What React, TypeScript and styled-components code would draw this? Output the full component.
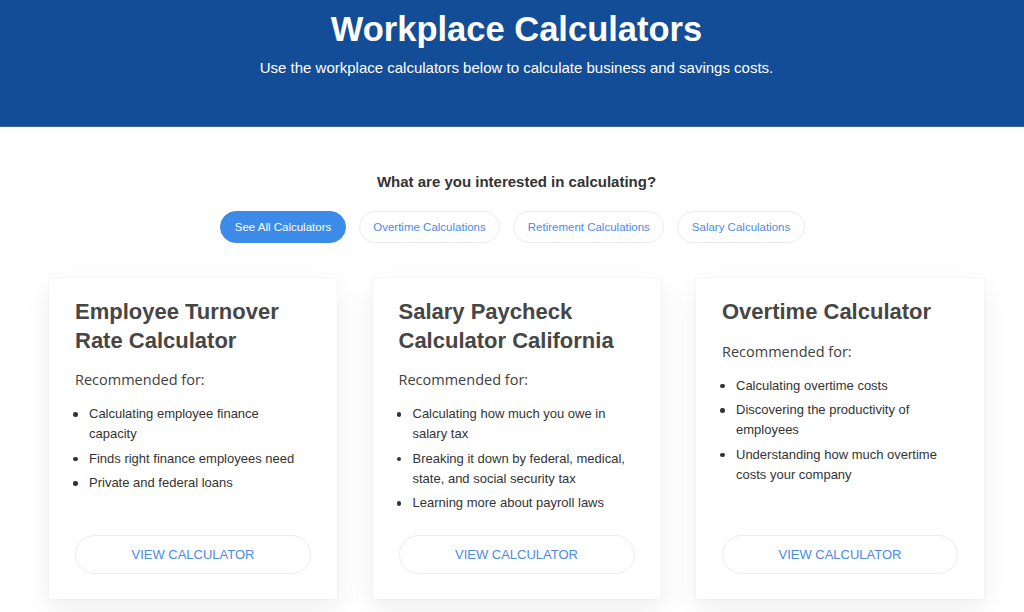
import React from "react";
import styled, { createGlobalStyle } from "styled-components";

const GlobalStyle = createGlobalStyle`
  html, body {
    margin: 0;
    padding: 0;
    background: #ffffff;
    font-family: "Liberation Sans", Arial, Helvetica, sans-serif;
    -webkit-font-smoothing: antialiased;
  }
  * { box-sizing: border-box; }
`;

const Page = styled.div`
  width: 1024px;
  height: 612px;
  overflow: hidden;
  background: #ffffff;
`;

const Hero = styled.header`
  height: 127px;
  background: #144d97;
  border-bottom: 1px solid #3a68a6;
  padding: 8.5px 0 0 9px;
  text-align: center;
  color: #ffffff;
`;

const HeroTitle = styled.h1`
  margin: 0;
  font-size: 34.5px;
  line-height: 40px;
  font-weight: 700;
`;

const HeroText = styled.p`
  margin: 9.5px 0 0;
  font-size: 15px;
  line-height: 20px;
`;

const Main = styled.main`
  padding: 45px 0 0 9px;
  display: flex;
  flex-direction: column;
  align-items: center;
`;

const Question = styled.h2`
  margin: 0;
  font-size: 15px;
  line-height: 20px;
  font-weight: 700;
  color: #333333;
`;

const Filters = styled.div`
  margin-top: 19px;
  display: flex;
  gap: 13px;
  justify-content: center;
  padding-right: 8px;
`;

const Pill = styled.button<{ $active?: boolean }>`
  height: 32px;
  padding: 0 13.5px;
  border-radius: 16px;
  border: 1px solid ${(p) => (p.$active ? "#3d8be8" : "#ececec")};
  background: ${(p) => (p.$active ? "#3d8be8" : "#ffffff")};
  color: ${(p) => (p.$active ? "#ffffff" : "#4a8be6")};
  font-family: "Liberation Sans", Arial, sans-serif;
  font-size: 11.5px;
  line-height: 29px;
  cursor: pointer;
  white-space: nowrap;
`;

const Cards = styled.div`
  margin-top: 35px;
  display: grid;
  grid-template-columns: repeat(3, 288px);
  column-gap: 35.5px;
`;

const Card = styled.article`
  min-height: 321px;
  background: #ffffff;
  padding: 20px 26px 25.5px 26px;
  display: flex;
  flex-direction: column;
  box-shadow: 0 0 0 1px rgba(0, 0, 0, 0.02), 0 10px 28px rgba(0, 0, 0, 0.07);
`;

const CardTitle = styled.h3`
  margin: 0;
  font-size: 22px;
  line-height: 28.5px;
  font-weight: 700;
  color: #464646;
`;

const Recommended = styled.p`
  margin: 15px 0 0;
  font-family: "Open Sans", "Liberation Sans", sans-serif;
  font-size: 14.5px;
  line-height: 20px;
  color: #404040;
`;

const List = styled.ul`
  margin: 14px 0 0;
  padding: 0 6px 0 0;
  list-style: none;
`;

const Item = styled.li`
  display: flex;
  font-size: 13px;
  line-height: 20px;
  color: #333333;

  & + & {
    margin-top: 4.5px;
  }

  &::before {
    content: "";
    flex: none;
    width: 4.5px;
    height: 4.5px;
    margin: 8.25px 11.5px 0 -2px;
    border-radius: 50%;
    background: #333333;
  }
`;

const ViewButton = styled.button`
  margin-top: auto;
  width: 100%;
  height: 39px;
  border: 1px solid #ededed;
  border-radius: 20px;
  background: #ffffff;
  color: #4a8be6;
  font-family: "Liberation Sans", Arial, sans-serif;
  font-size: 13px;
  cursor: pointer;
`;

const filters = [
  { label: "See All Calculators", active: true },
  { label: "Overtime Calculations" },
  { label: "Retirement Calculations" },
  { label: "Salary Calculations" },
];

const calculators = [
  {
    title: "Employee Turnover Rate Calculator",
    items: [
      "Calculating employee finance capacity",
      "Finds right finance employees need",
      "Private and federal loans",
    ],
  },
  {
    title: "Salary Paycheck Calculator California",
    items: [
      "Calculating how much you owe in salary tax",
      "Breaking it down by federal, medical, state, and social security tax",
      "Learning more about payroll laws",
    ],
  },
  {
    title: "Overtime Calculator",
    items: [
      "Calculating overtime costs",
      "Discovering the productivity of employees",
      "Understanding how much overtime costs your company",
    ],
  },
];

export default function App() {
  return (
    <Page>
      <GlobalStyle />
      <Hero>
        <HeroTitle>Workplace Calculators</HeroTitle>
        <HeroText>
          Use the workplace calculators below to calculate business and savings costs.
        </HeroText>
      </Hero>
      <Main>
        <Question>What are you interested in calculating?</Question>
        <Filters>
          {filters.map((f) => (
            <Pill key={f.label} $active={f.active}>
              {f.label}
            </Pill>
          ))}
        </Filters>
        <Cards>
          {calculators.map((c) => (
            <Card key={c.title}>
              <CardTitle>{c.title}</CardTitle>
              <Recommended>Recommended for:</Recommended>
              <List>
                {c.items.map((it) => (
                  <Item key={it}>{it}</Item>
                ))}
              </List>
              <ViewButton>VIEW CALCULATOR</ViewButton>
            </Card>
          ))}
        </Cards>
      </Main>
    </Page>
  );
}
